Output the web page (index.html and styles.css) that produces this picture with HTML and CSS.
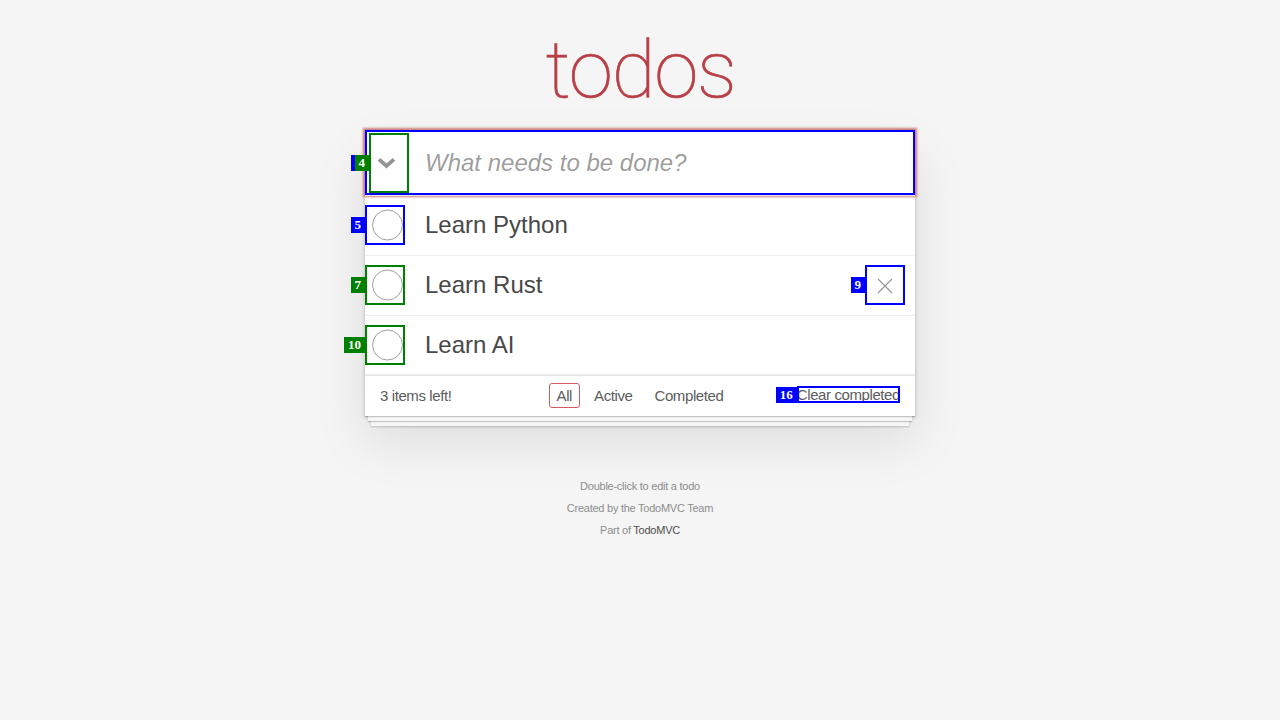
FILE: index.html
```html
<!DOCTYPE html>
<html lang="en">
<head>
<meta charset="utf-8">
<title>TodoMVC</title>
<link rel="stylesheet" href="styles.css">
</head>
<body>
<div class="page">
  <h1 class="title">todos</h1>
  <section class="todoapp">
    <header class="header">
      <input class="new-todo" type="text" placeholder="What needs to be done?">
      <span class="input-ann ann ann-blue" data-n="3"></span>
      <label class="toggle-all">
        <svg width="45" height="65" viewBox="0 0 45 65"><polyline points="14,29.3 21.5,36 29,29.3" fill="none" stroke="#949494" stroke-width="3.8"/></svg>
      </label>
      <span class="toggle-all-ann ann ann-green" data-n="4"></span>
    </header>
    <section class="main">
      <ul class="todo-list">
        <li class="todo">
          <span class="toggle ann ann-blue" data-n="5"><svg width="40" height="40" viewBox="0 0 40 40"><circle cx="22.5" cy="20" r="15" fill="none" stroke="#949494" stroke-width="0.9"/></svg></span>
          <label class="todo-label">Learn Python</label>
        </li>
        <li class="todo">
          <span class="toggle ann ann-green" data-n="7"><svg width="40" height="40" viewBox="0 0 40 40"><circle cx="22.5" cy="20" r="15" fill="none" stroke="#949494" stroke-width="0.9"/></svg></span>
          <label class="todo-label">Learn Rust</label>
          <span class="destroy ann ann-blue" data-n="9"><svg width="40" height="40" viewBox="0 0 40 40"><path d="M13 14 L27 28 M27 14 L13 28" fill="none" stroke="#949494" stroke-width="1.1"/></svg></span>
        </li>
        <li class="todo">
          <span class="toggle ann ann-green" data-n="10"><svg width="40" height="40" viewBox="0 0 40 40"><circle cx="22.5" cy="20" r="15" fill="none" stroke="#949494" stroke-width="0.9"/></svg></span>
          <label class="todo-label">Learn AI</label>
        </li>
      </ul>
    </section>
    <footer class="footer">
      <span class="todo-count">3 items left!</span>
      <ul class="filters">
        <li><a class="selected" href="#/">All</a></li>
        <li><a href="#/active">Active</a></li>
        <li><a href="#/completed">Completed</a></li>
      </ul>
      <span class="clear-completed ann ann-blue" data-n="16">Clear completed</span>
    </footer>
  </section>
  <footer class="info">
    <p>Double-click to edit a todo</p>
    <p>Created by the TodoMVC Team</p>
    <p>Part of <a href="#">TodoMVC</a></p>
  </footer>
</div>
</body>
</html>
```
FILE: styles.css
```css
html, body {
  margin: 0;
  padding: 0;
}

body {
  background: #f5f5f5;
  color: #111111;
  font-family: "Liberation Sans", Arial, sans-serif;
  font-size: 14px;
  line-height: 1.4em;
}

.page {
  width: 550px;
  margin: 0 auto;
  padding-top: 30px;
}

.title {
  margin: 0 0 20px 0;
  height: 80px;
  font-family: Roboto, "Liberation Sans", sans-serif;
  font-size: 80px;
  line-height: 80px;
  font-weight: 100;
  letter-spacing: -1.2px;
  text-indent: 1.2px;
  text-align: center;
  color: #b83f45;
  -webkit-text-stroke: 0.7px #b83f45;
}

.todoapp {
  position: relative;
  background: #fff;
  box-shadow: 0 2px 4px 0 rgba(0, 0, 0, 0.2), 0 25px 50px 0 rgba(0, 0, 0, 0.1);
}

.header {
  position: relative;
}

.new-todo {
  display: block;
  width: 100%;
  height: 65px;
  margin: 0;
  padding: 16px 16px 16px 60px;
  box-sizing: border-box;
  border: none;
  outline: none;
  background: rgba(0, 0, 0, 0.003);
  font-family: inherit;
  font-size: 24px;
  line-height: 1.4em;
  color: #111;
  box-shadow: inset 0 -2px 1px rgba(0, 0, 0, 0.03), 0 0 2px 2px #cf7d7d;
}

.new-todo::placeholder {
  font-style: italic;
  font-weight: 400;
  color: rgba(0, 0, 0, 0.4);
}

.toggle-all {
  position: absolute;
  left: 0;
  top: 0;
  width: 45px;
  height: 65px;
  display: block;
}

.toggle-all svg {
  display: block;
}

.input-ann {
  position: absolute;
  left: 0;
  top: 0;
  right: 0;
  bottom: 0;
}

.toggle-all-ann {
  position: absolute;
  left: 4px;
  top: 3px;
  width: 40px;
  height: 60px;
}

.main {
  position: relative;
  border-top: 1px solid #e6e6e6;
}

.todo-list {
  margin: 0;
  padding: 0;
  list-style: none;
}

.todo {
  display: flex;
  align-items: center;
  border-bottom: 1px solid #ededed;
  font-size: 24px;
}

.toggle {
  flex: none;
  width: 40px;
  height: 40px;
}

.toggle svg,
.destroy svg {
  display: block;
}

.todo-label {
  flex: 1;
  display: block;
  padding: 15px 15px 15px 20px;
  line-height: 1.2;
  font-weight: 400;
  color: #484848;
}

.destroy {
  flex: none;
  width: 40px;
  height: 40px;
  margin-right: 10px;
}

.footer {
  display: grid;
  grid-template-columns: minmax(0, 1fr) auto minmax(0, 1fr);
  align-items: start;
  height: 20px;
  padding: 10px 15px;
  border-top: 1px solid #e6e6e6;
  font-size: 15px;
  line-height: 20px;
  letter-spacing: -0.4px;
  color: #5c5c5c;
}

.footer::before {
  content: "";
  position: absolute;
  right: 0;
  bottom: 0;
  left: 0;
  height: 50px;
  overflow: hidden;
  pointer-events: none;
  box-shadow: 0 1px 1px rgba(0, 0, 0, 0.2),
    0 8px 0 -3px #f6f6f6,
    0 9px 1px -3px rgba(0, 0, 0, 0.2),
    0 16px 0 -6px #f6f6f6,
    0 17px 2px -6px rgba(0, 0, 0, 0.2);
}

.todo-count {
  justify-self: start;
}

.filters {
  display: flex;
  margin: 0;
  padding: 0;
  list-style: none;
}

.filters a {
  display: inline;
  margin: 3px;
  padding: 3px 7px;
  color: inherit;
  text-decoration: none;
  border: 1px solid transparent;
  border-radius: 3px;
}

.filters a.selected {
  border-color: #d65c5c;
}

.clear-completed {
  justify-self: end;
  display: block;
  line-height: 17px;
  height: 17px;
}

.info {
  margin: 65px auto 0;
  font-size: 11px;
  letter-spacing: -0.25px;
  color: #8d8d8d;
  text-align: center;
}

.info p {
  margin: 11px 0;
  line-height: 1;
}

.info a {
  color: #4d4d4d;
  text-decoration: none;
  font-weight: 400;
}

/* annotation overlays */
.ann {
  position: relative;
}

.ann-blue {
  --ann: #0000ff;
}

.ann-green {
  --ann: #008000;
}

.ann::after {
  content: "";
  position: absolute;
  left: 0;
  top: 0;
  right: 0;
  bottom: 0;
  border: 2px solid var(--ann);
  pointer-events: none;
}

.ann::before {
  content: attr(data-n);
  position: absolute;
  right: 100%;
  top: 50%;
  transform: translateY(-50%);
  padding: 0 4px;
  background: var(--ann);
  color: #fff;
  font-family: "Liberation Serif", "Times New Roman", serif;
  font-weight: 700;
  font-size: 13px;
  line-height: 16px;
  letter-spacing: 0;
  text-indent: 0;
  white-space: nowrap;
}

.input-ann,
.toggle-all-ann {
  position: absolute;
}
```
